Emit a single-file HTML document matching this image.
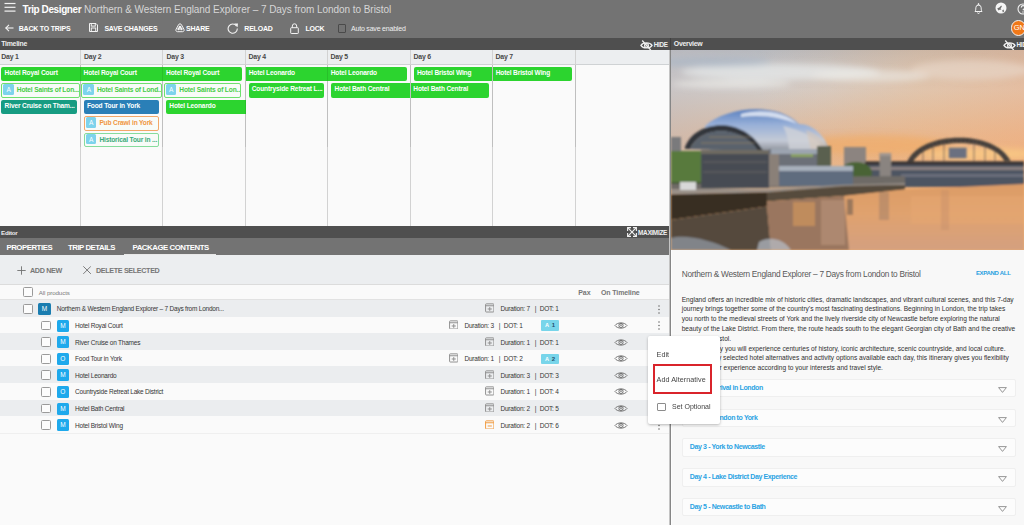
<!DOCTYPE html>
<html><head><meta charset="utf-8">
<style>
*{margin:0;padding:0;box-sizing:border-box}
html,body{width:1024px;height:525px;overflow:hidden;background:#fafafa;font-family:"Liberation Sans",sans-serif}
.a{position:absolute;white-space:nowrap}
#hdr{position:absolute;left:0;top:0;width:1024px;height:38px;background:#737373}
.tb{font-size:7px;font-weight:bold;color:#fff;letter-spacing:-0.2px}
.bar{position:absolute;height:12px;background:#4f4f4f}
.barlbl{font-size:6.9px;font-weight:bold;color:#eeeeee;top:2px;letter-spacing:-0.25px}
.col{position:absolute;top:50px;height:176px;border-left:1px solid #d2d2d2}
.dayh{position:absolute;top:50px;height:15px;background:#eceef0;border-bottom:1px solid #cfd2d4}
.dlbl{font-size:6.9px;font-weight:bold;color:#484848;top:53.2px;letter-spacing:-0.2px}
.blk{position:absolute;height:14.5px;border-radius:2px;font-size:6.6px;font-weight:bold;color:#fff;line-height:12.6px;padding-left:3.5px;white-space:nowrap;overflow:hidden;letter-spacing:-0.15px}
.g{background:#2cd42f}
.alt{background:#f8fbf8;border:1px solid #6ee06e;color:#44cc44;padding-left:0}
.badge{display:inline-block;width:10.5px;height:10.5px;background:#7dd3ec;color:#fff;border-radius:1.5px;text-align:center;line-height:11.3px;font-size:6.5px;font-weight:normal;margin:0 3px 0 1.2px;vertical-align:top;margin-top:0.4px}
.tab{top:243.5px;font-size:7.8px;font-weight:bold;color:#fff;line-height:8px;letter-spacing:-0.45px}
.tb2{top:266.5px;font-size:7.2px;font-weight:bold;color:#777;line-height:8px;letter-spacing:-0.35px}
.cb{width:9.8px;height:9.8px;border:1px solid #9a9a9a;border-radius:1.5px;background:#fcfcfc}
.mb{width:12.3px;height:12px;border-radius:1.5px;color:#fff;font-size:6.5px;text-align:center;line-height:12px}
.rt{font-size:6.5px;color:#353535;line-height:8px;margin-top:1.2px;letter-spacing:-0.22px}
.ab{width:18.7px;height:10.9px;background:#78d5ea;font-size:6px;color:#1a5c80;line-height:10.7px;text-align:center;border-radius:1px}
.acc{left:682.2px;width:333.5px;height:18.5px;background:#fcfcfc;border:1px solid #efefef;border-radius:2px}
.acct{left:689.8px;font-size:7px;font-weight:bold;color:#2ba3e3;line-height:9px;letter-spacing:-0.38px}
</style></head><body>
<!-- header -->
<div id="hdr"></div>
<svg class="a" style="left:4px;top:2px" width="12" height="11" viewBox="0 0 12 11"><g stroke="#f2f2f2" stroke-width="1.2"><line x1="0.5" y1="1.5" x2="11.5" y2="1.5"/><line x1="0.5" y1="5.3" x2="11.5" y2="5.3"/><line x1="0.5" y1="9.1" x2="11.5" y2="9.1"/></g></svg>
<div class="a" style="left:22.5px;top:2.8px;font-size:10px;font-weight:bold;color:#fff;letter-spacing:-0.4px;line-height:14px">Trip Designer</div>
<div class="a" style="left:84px;top:2.8px;font-size:10px;color:#d6d6d6;letter-spacing:-0.05px;line-height:14px">Northern &amp; Western England Explorer – 7 Days from London to Bristol</div>

<!-- toolbar -->
<svg class="a" style="left:4.5px;top:24px" width="9" height="8" viewBox="0 0 9 8"><g stroke="#f2f2f2" stroke-width="1.1" fill="none"><line x1="0.8" y1="4" x2="8.5" y2="4"/><polyline points="4,0.8 0.8,4 4,7.2"/></g></svg>
<div class="a tb" style="left:18.7px;top:24px;line-height:9px">BACK TO TRIPS</div>
<svg class="a" style="left:88.5px;top:23.3px" width="9" height="9" viewBox="0 0 9 9"><g stroke="#f2f2f2" stroke-width="1" fill="none"><path d="M0.5 0.5 H7 L8.5 2 V8.5 H0.5 Z"/><rect x="2.3" y="0.5" width="4" height="2.6"/><rect x="2.3" y="5" width="4.4" height="3.5"/></g></svg>
<div class="a tb" style="left:104.4px;top:24px;line-height:9px">SAVE CHANGES</div>
<svg class="a" style="left:175px;top:23px" width="10" height="9.5" viewBox="0 0 10 9.5"><path d="M5 0.8 C5.8 0.8 6.2 1.3 6.6 2 L8.9 6.2 C9.5 7.3 8.9 8.7 7.6 8.7 H2.4 C1.1 8.7 0.5 7.3 1.1 6.2 L3.4 2 C3.8 1.3 4.2 0.8 5 0.8 Z" fill="none" stroke="#f2f2f2" stroke-width="1"/><circle cx="5" cy="4.2" r="1.4" fill="#f2f2f2"/><circle cx="3.6" cy="6" r="1.2" fill="#f2f2f2"/><circle cx="6.4" cy="6" r="1.2" fill="#f2f2f2"/></svg>
<div class="a tb" style="left:186px;top:24px;line-height:9px">SHARE</div>
<svg class="a" style="left:227px;top:22.5px" width="12" height="11" viewBox="0 0 12 11"><path d="M9.6 3.2 A4.6 4.6 0 1 0 10.3 5.5" fill="none" stroke="#f2f2f2" stroke-width="1.1"/><path d="M7.2 0.6 L11 0.4 L10.6 4.2 Z" fill="#f2f2f2"/></svg>
<div class="a tb" style="left:244.3px;top:24px;line-height:9px">RELOAD</div>
<svg class="a" style="left:290px;top:22.5px" width="9" height="11" viewBox="0 0 9 11"><g stroke="#f2f2f2" stroke-width="1" fill="none"><rect x="0.7" y="4.7" width="7.6" height="5.8" rx="0.6"/><path d="M2.3 4.7 V3 A2.2 2.2 0 0 1 6.7 3 V4.7"/></g></svg>
<div class="a tb" style="left:305.4px;top:24px;line-height:9px">LOCK</div>
<div class="a" style="left:337.7px;top:24.4px;width:8.8px;height:8.8px;border:1px solid #4a4a4a;border-radius:1px"></div>
<div class="a" style="left:351px;top:24px;font-size:7px;color:#f0f0f0;letter-spacing:-0.2px;line-height:9px">Auto save enabled</div>
<!-- right icons -->
<svg class="a" style="left:974px;top:2.5px" width="9" height="11" viewBox="0 0 9 11"><g stroke="#f2f2f2" stroke-width="1" fill="none"><path d="M1 8.5 C1.8 7.5 1.8 6.5 1.8 4.8 A2.7 2.7 0 0 1 7.2 4.8 C7.2 6.5 7.2 7.5 8 8.5 Z"/><circle cx="4.5" cy="1.2" r="0.6" fill="#f2f2f2"/><path d="M3.6 9.6 A0.9 0.9 0 0 0 5.4 9.6" /></g></svg>
<svg class="a" style="left:995px;top:2.2px" width="12" height="12" viewBox="0 0 12 12"><circle cx="6" cy="6" r="5.5" fill="#f4f4f4"/><path d="M2.2 6.6 L4.6 5.2 L6.2 3.4 L6.9 4.6 L5.6 6.4 L6.4 8 L5 7.6 L3.6 8.4 Z" fill="#6c6c6c"/><path d="M7.2 8.2 L8.6 7.6 L9.2 9.4 L7.8 10.4 Z" fill="#7a7a7a"/></svg>
<svg class="a" style="left:1017px;top:2.5px" width="12" height="12" viewBox="0 0 12 12"><circle cx="6" cy="6" r="5" fill="none" stroke="#f2f2f2" stroke-width="1.1"/><path d="M4.3 4.6 A1.8 1.8 0 1 1 6.5 6.2 L6 7.3" fill="none" stroke="#f2f2f2" stroke-width="1.1"/><circle cx="6" cy="9" r="0.7" fill="#f2f2f2"/></svg>
<div class="a" style="left:1010.5px;top:20.3px;width:15.5px;height:15.5px;border-radius:50%;background:#f07818;border:1px solid #f4f4f4;color:#fff;font-size:7.5px;line-height:13.5px;padding-left:2.2px">GN</div>

<!-- timeline bar -->
<div class="bar" style="left:0;top:38px;width:670px"></div>
<div class="a barlbl" style="left:1.2px;top:39px;line-height:9px">Timeline</div>
<svg class="a" style="left:640px;top:39.5px" width="13" height="10.5" viewBox="0 0 13 10.5"><g stroke="#f0f0f0" stroke-width="1.25" fill="none"><path d="M0.9 5.4 C3 2 10 2 12.1 5.4 C10 8.8 3 8.8 0.9 5.4 Z"/><circle cx="6.5" cy="5.4" r="1.9"/><line x1="2.2" y1="0.5" x2="10.8" y2="10.2"/></g></svg>
<div class="a" style="left:653.7px;top:40.6px;font-size:6.3px;font-weight:bold;color:#f0f0f0;line-height:8px;letter-spacing:-0.25px">HIDE</div>
<div class="bar" style="left:671px;top:38px;width:353px"></div>
<div class="a barlbl" style="left:673.8px;top:39px;line-height:9px">Overview</div>
<svg class="a" style="left:1003px;top:39.5px" width="13" height="10.5" viewBox="0 0 13 10.5"><g stroke="#f0f0f0" stroke-width="1.25" fill="none"><path d="M0.9 5.4 C3 2 10 2 12.1 5.4 C10 8.8 3 8.8 0.9 5.4 Z"/><circle cx="6.5" cy="5.4" r="1.9"/><line x1="2.2" y1="0.5" x2="10.8" y2="10.2"/></g></svg>
<div class="a" style="left:1016.5px;top:40.6px;font-size:6.3px;font-weight:bold;color:#f0f0f0;line-height:8px;letter-spacing:-0.25px">HIDE</div>
<!-- timeline body -->
<div class="a" style="left:0;top:50px;width:670px;height:176px;background:#fafafa"></div>
<div class="dayh" style="left:0;width:670px"></div>
<div class="col" style="left:80px"></div>
<div class="col" style="left:162px"></div>
<div class="col" style="left:245px"></div>
<div class="col" style="left:327px"></div>
<div class="col" style="left:410px"></div>
<div class="col" style="left:492px"></div>
<div class="col" style="left:575px"></div>
<div class="a dlbl" style="left:1.3px;line-height:8px">Day 1</div>
<div class="a dlbl" style="left:84px;line-height:8px">Day 2</div>
<div class="a dlbl" style="left:166.5px;line-height:8px">Day 3</div>
<div class="a dlbl" style="left:248.5px;line-height:8px">Day 4</div>
<div class="a dlbl" style="left:330.5px;line-height:8px">Day 5</div>
<div class="a dlbl" style="left:413.5px;line-height:8px">Day 6</div>
<div class="a dlbl" style="left:495.5px;line-height:8px">Day 7</div>
<div class="blk g" style="left:1.1px;top:66.5px;width:79.9px;border-radius:2px 0 0 2px;">Hotel Royal Court</div>
<div class="blk g" style="left:81px;top:66.5px;width:82.5px;border-radius:0 0 0 0;padding-left:2.6px">Hotel Royal Court</div>
<div class="blk g" style="left:163.5px;top:66.5px;width:78.19999999999999px;border-radius:0 2px 2px 0;padding-left:2.6px">Hotel Royal Court</div>
<div class="blk g" style="left:245.5px;top:66.5px;width:82.0px;border-radius:0 0 0 0;padding-left:3.2px">Hotel Leonardo</div>
<div class="blk g" style="left:327.5px;top:66.5px;width:79.30000000000001px;border-radius:0 2px 2px 0;padding-left:3.2px">Hotel Leonardo</div>
<div class="blk g" style="left:413.7px;top:66.5px;width:78.80000000000001px;border-radius:2px 0 0 2px;padding-left:3.3px">Hotel Bristol Wing</div>
<div class="blk g" style="left:492.5px;top:66.5px;width:79.39999999999998px;border-radius:0 2px 2px 0;padding-left:3.2px">Hotel Bristol Wing</div>
<div class="blk alt" style="left:1.1px;top:83px;width:78.60000000000001px;border-radius:2px 2px 2px 2px;"><span class="badge">A</span>Hotel Saints of Lon...</div>
<div class="blk alt" style="left:81.3px;top:83px;width:80.7px;border-radius:2px 2px 2px 2px;"><span class="badge">A</span>Hotel Saints of Lond...</div>
<div class="blk alt" style="left:163.6px;top:83px;width:77.9px;border-radius:2px 2px 2px 2px;"><span class="badge">A</span>Hotel Saints of Lon...</div>
<div class="blk g" style="left:248.75px;top:83px;width:75.55000000000001px;border-radius:2px 2px 2px 2px;padding-left:3px">Countryside Retreat L...</div>
<div class="blk g" style="left:331.2px;top:83px;width:79.30000000000001px;border-radius:2px 0 0 2px;padding-left:3.4px">Hotel Bath Central</div>
<div class="blk g" style="left:410.5px;top:83px;width:78.80000000000001px;border-radius:0 2px 2px 0;padding-left:2.8px">Hotel Bath Central</div>
<div class="blk " style="left:1.1px;top:99.5px;width:75.60000000000001px;border-radius:2px 2px 2px 2px;background:#179c82;padding-left:3.5px">River Cruise on Tham...</div>
<div class="blk " style="left:83.7px;top:99.5px;width:75.60000000000001px;border-radius:2px 2px 2px 2px;background:#2a7fb7;padding-left:3.3px">Food Tour in York</div>
<div class="blk g" style="left:166px;top:99.5px;width:79.5px;border-radius:2px 0 0 2px;padding-left:3.3px">Hotel Leonardo</div>
<div class="blk alt" style="left:83.7px;top:116px;width:75.60000000000001px;border-radius:2px 2px 2px 2px;border-color:#f2a86a;color:#f0973f"><span class="badge">A</span>Pub Crawl in York</div>
<div class="blk alt" style="left:83.7px;top:132.5px;width:75.60000000000001px;border-radius:2px 2px 2px 2px;border-color:#86dc9c;color:#3aaa78"><span class="badge">A</span>Historical Tour in ...</div>

<div class="a" style="left:80px;top:65px;width:1px;height:82px;background:rgba(0,0,0,0.09)"></div>
<div class="a" style="left:162px;top:65px;width:1px;height:82px;background:rgba(0,0,0,0.09)"></div>
<div class="a" style="left:245px;top:65px;width:1px;height:82px;background:rgba(0,0,0,0.09)"></div>
<div class="a" style="left:327px;top:65px;width:1px;height:82px;background:rgba(0,0,0,0.09)"></div>
<div class="a" style="left:410px;top:65px;width:1px;height:82px;background:rgba(0,0,0,0.09)"></div>
<div class="a" style="left:492px;top:65px;width:1px;height:82px;background:rgba(0,0,0,0.09)"></div>
<div class="a" style="left:575px;top:65px;width:1px;height:82px;background:rgba(0,0,0,0.09)"></div>
<!-- editor -->
<div class="bar" style="left:0;top:226px;width:670px"></div>
<div class="a barlbl" style="left:1px;top:227.5px;line-height:9px;font-size:6.2px">Editor</div>
<svg class="a" style="left:627px;top:227.3px" width="10" height="10" viewBox="0 0 10 10"><g stroke="#f0f0f0" stroke-width="1.1" fill="none"><line x1="1.2" y1="1.2" x2="8.8" y2="8.8"/><line x1="8.8" y1="1.2" x2="1.2" y2="8.8"/><polyline points="0.6,4 0.6,0.6 4,0.6"/><polyline points="6,0.6 9.4,0.6 9.4,4"/><polyline points="0.6,6 0.6,9.4 4,9.4"/><polyline points="6,9.4 9.4,9.4 9.4,6"/></g></svg>
<div class="a" style="left:638px;top:228.6px;font-size:6.4px;font-weight:bold;color:#f0f0f0;line-height:8px;letter-spacing:-0.28px">MAXIMIZE</div>
<div class="a" style="left:0;top:238px;width:670px;height:16.5px;background:#737373"></div>
<div class="a" style="left:124.2px;top:253.5px;width:91.7px;height:1px;background:#e8e8e8"></div>
<div class="a tab" style="left:6.4px">PROPERTIES</div>
<div class="a tab" style="left:67.9px">TRIP DETAILS</div>
<div class="a tab" style="left:132.5px">PACKAGE CONTENTS</div>
<div class="a" style="left:0;top:254.5px;width:670px;height:30px;background:#eceef0;border-bottom:1px solid #dcdcdc"></div>
<svg class="a" style="left:17px;top:265.5px" width="9" height="9" viewBox="0 0 9 9"><g stroke="#707070" stroke-width="0.9"><line x1="4.5" y1="0.3" x2="4.5" y2="8.7"/><line x1="0.3" y1="4.5" x2="8.7" y2="4.5"/></g></svg>
<div class="a tb2" style="left:30px">ADD NEW</div>
<svg class="a" style="left:83.3px;top:265.7px" width="8.2" height="8.2" viewBox="0 0 8 8"><g stroke="#707070" stroke-width="0.9"><line x1="0.3" y1="0.3" x2="7.7" y2="7.7"/><line x1="7.7" y1="0.3" x2="0.3" y2="7.7"/></g></svg>
<div class="a tb2" style="left:96px">DELETE SELECTED</div>
<div class="a" style="left:0;top:285px;width:670px;height:15px;background:#fafafa;border-bottom:1px solid #e2e2e2"></div>
<div class="a cb" style="left:23px;top:287.4px"></div>
<div class="a" style="left:38.7px;top:288.7px;font-size:6.2px;color:#7a7a7a;line-height:8px;letter-spacing:-0.1px">All products</div>
<div class="a" style="left:578.3px;top:288.7px;font-size:7px;font-weight:bold;color:#777;line-height:8px;letter-spacing:-0.1px">Pax</div>
<div class="a" style="left:601px;top:288.7px;font-size:7px;font-weight:bold;color:#777;line-height:8px;letter-spacing:-0.12px">On Timeline</div>
<div class="a" style="left:0;top:300.00px;width:670px;height:16.6px;background:#ebedef"></div>
<div class="a cb" style="left:23px;top:304.00px"></div>
<div class="a mb" style="left:38.4px;top:303.00px;background:#1a7db0">M</div>
<div class="a rt" style="left:56.7px;top:304.30px">Northern &amp; Western England Explorer – 7 Days from London...</div>
<svg class="a" style="left:484.8px;top:303.30px" width="9.5" height="9.5" viewBox="0 0 10 10"><g stroke="#8c8c8c" stroke-width="1" fill="none"><rect x="0.6" y="0.9" width="8.8" height="8.6" rx="0.8"/><line x1="0.6" y1="2.9" x2="9.4" y2="2.9"/><line x1="5" y1="4.3" x2="5" y2="8.3"/><line x1="2.8" y1="6.3" x2="7.2" y2="6.3"/></g></svg>
<div class="a rt" style="left:500.5px;top:304.30px">Duration: 7</div><div class="a rt" style="left:534.7px;top:304.30px">|</div><div class="a rt" style="left:539.7px;top:304.30px">DOT: 1</div>
<svg class="a" style="left:657.7px;top:304.50px" width="2" height="9" viewBox="0 0 2 9"><g fill="#707070"><circle cx="1" cy="1" r="0.8"/><circle cx="1" cy="4.5" r="0.8"/><circle cx="1" cy="8" r="0.8"/></g></svg>
<div class="a" style="left:0;top:316.60px;width:670px;height:16.6px;background:#fafafa"></div>
<div class="a cb" style="left:41px;top:320.60px"></div>
<div class="a mb" style="left:56.7px;top:319.60px;background:#1ea9ec">M</div>
<div class="a rt" style="left:75.1px;top:320.90px">Hotel Royal Court</div>
<svg class="a" style="left:448.8px;top:319.90px" width="9.5" height="9.5" viewBox="0 0 10 10"><g stroke="#8c8c8c" stroke-width="1" fill="none"><rect x="0.6" y="0.9" width="8.8" height="8.6" rx="0.8"/><line x1="0.6" y1="2.9" x2="9.4" y2="2.9"/><line x1="5" y1="4.3" x2="5" y2="8.3"/><line x1="2.8" y1="6.3" x2="7.2" y2="6.3"/></g></svg>
<div class="a rt" style="left:464.5px;top:320.90px">Duration: 3</div><div class="a rt" style="left:498.7px;top:320.90px">|</div><div class="a rt" style="left:503.7px;top:320.90px">DOT: 1</div>
<div class="a ab" style="left:540.8px;top:320.30px"><span style="position:absolute;left:4.3px;top:0;color:#fff;font-size:5.6px;font-weight:bold">A</span><span style="position:absolute;left:11px;top:0;color:#23506e;font-weight:bold">1</span></div>
<svg class="a" style="left:613.6px;top:321.00px" width="14" height="9" viewBox="0 0 14 9"><path d="M1 4.5 C3.4 1 10.6 1 13 4.5 C10.6 8 3.4 8 1 4.5 Z" fill="none" stroke="#707070" stroke-width="0.95"/><circle cx="7" cy="4.4" r="2.1" fill="none" stroke="#707070" stroke-width="1"/><circle cx="7" cy="4.1" r="0.85" fill="#707070"/></svg>
<svg class="a" style="left:657.7px;top:321.10px" width="2" height="9" viewBox="0 0 2 9"><g fill="#707070"><circle cx="1" cy="1" r="0.8"/><circle cx="1" cy="4.5" r="0.8"/><circle cx="1" cy="8" r="0.8"/></g></svg>
<div class="a" style="left:0;top:333.20px;width:670px;height:16.6px;background:#ebedef"></div>
<div class="a cb" style="left:41px;top:337.20px"></div>
<div class="a mb" style="left:56.7px;top:336.20px;background:#1ea9ec">M</div>
<div class="a rt" style="left:75.1px;top:337.50px">River Cruise on Thames</div>
<svg class="a" style="left:484.8px;top:336.50px" width="9.5" height="9.5" viewBox="0 0 10 10"><g stroke="#8c8c8c" stroke-width="1" fill="none"><rect x="0.6" y="0.9" width="8.8" height="8.6" rx="0.8"/><line x1="0.6" y1="2.9" x2="9.4" y2="2.9"/><line x1="5" y1="4.3" x2="5" y2="8.3"/><line x1="2.8" y1="6.3" x2="7.2" y2="6.3"/></g></svg>
<div class="a rt" style="left:500.5px;top:337.50px">Duration: 1</div><div class="a rt" style="left:534.7px;top:337.50px">|</div><div class="a rt" style="left:539.7px;top:337.50px">DOT: 1</div>
<svg class="a" style="left:613.6px;top:337.60px" width="14" height="9" viewBox="0 0 14 9"><path d="M1 4.5 C3.4 1 10.6 1 13 4.5 C10.6 8 3.4 8 1 4.5 Z" fill="none" stroke="#707070" stroke-width="0.95"/><circle cx="7" cy="4.4" r="2.1" fill="none" stroke="#707070" stroke-width="1"/><circle cx="7" cy="4.1" r="0.85" fill="#707070"/></svg>
<div class="a" style="left:0;top:349.80px;width:670px;height:16.6px;background:#fafafa"></div>
<div class="a cb" style="left:41px;top:353.80px"></div>
<div class="a mb" style="left:56.7px;top:352.80px;background:#1ea9ec">O</div>
<div class="a rt" style="left:75.1px;top:354.10px">Food Tour in York</div>
<svg class="a" style="left:448.8px;top:353.10px" width="9.5" height="9.5" viewBox="0 0 10 10"><g stroke="#8c8c8c" stroke-width="1" fill="none"><rect x="0.6" y="0.9" width="8.8" height="8.6" rx="0.8"/><line x1="0.6" y1="2.9" x2="9.4" y2="2.9"/><line x1="5" y1="4.3" x2="5" y2="8.3"/><line x1="2.8" y1="6.3" x2="7.2" y2="6.3"/></g></svg>
<div class="a rt" style="left:464.5px;top:354.10px">Duration: 1</div><div class="a rt" style="left:498.7px;top:354.10px">|</div><div class="a rt" style="left:503.7px;top:354.10px">DOT: 2</div>
<div class="a ab" style="left:540.8px;top:353.50px"><span style="position:absolute;left:4.3px;top:0;color:#fff;font-size:5.6px;font-weight:bold">A</span><span style="position:absolute;left:11px;top:0;color:#23506e;font-weight:bold">2</span></div>
<svg class="a" style="left:613.6px;top:354.20px" width="14" height="9" viewBox="0 0 14 9"><path d="M1 4.5 C3.4 1 10.6 1 13 4.5 C10.6 8 3.4 8 1 4.5 Z" fill="none" stroke="#707070" stroke-width="0.95"/><circle cx="7" cy="4.4" r="2.1" fill="none" stroke="#707070" stroke-width="1"/><circle cx="7" cy="4.1" r="0.85" fill="#707070"/></svg>
<div class="a" style="left:0;top:366.40px;width:670px;height:16.6px;background:#ebedef"></div>
<div class="a cb" style="left:41px;top:370.40px"></div>
<div class="a mb" style="left:56.7px;top:369.40px;background:#1ea9ec">M</div>
<div class="a rt" style="left:75.1px;top:370.70px">Hotel Leonardo</div>
<svg class="a" style="left:484.8px;top:369.70px" width="9.5" height="9.5" viewBox="0 0 10 10"><g stroke="#8c8c8c" stroke-width="1" fill="none"><rect x="0.6" y="0.9" width="8.8" height="8.6" rx="0.8"/><line x1="0.6" y1="2.9" x2="9.4" y2="2.9"/><line x1="5" y1="4.3" x2="5" y2="8.3"/><line x1="2.8" y1="6.3" x2="7.2" y2="6.3"/></g></svg>
<div class="a rt" style="left:500.5px;top:370.70px">Duration: 3</div><div class="a rt" style="left:534.7px;top:370.70px">|</div><div class="a rt" style="left:539.7px;top:370.70px">DOT: 3</div>
<svg class="a" style="left:613.6px;top:370.80px" width="14" height="9" viewBox="0 0 14 9"><path d="M1 4.5 C3.4 1 10.6 1 13 4.5 C10.6 8 3.4 8 1 4.5 Z" fill="none" stroke="#707070" stroke-width="0.95"/><circle cx="7" cy="4.4" r="2.1" fill="none" stroke="#707070" stroke-width="1"/><circle cx="7" cy="4.1" r="0.85" fill="#707070"/></svg>
<div class="a" style="left:0;top:383.00px;width:670px;height:16.6px;background:#fafafa"></div>
<div class="a cb" style="left:41px;top:387.00px"></div>
<div class="a mb" style="left:56.7px;top:386.00px;background:#1ea9ec">O</div>
<div class="a rt" style="left:75.1px;top:387.30px">Countryside Retreat Lake District</div>
<svg class="a" style="left:484.8px;top:386.30px" width="9.5" height="9.5" viewBox="0 0 10 10"><g stroke="#8c8c8c" stroke-width="1" fill="none"><rect x="0.6" y="0.9" width="8.8" height="8.6" rx="0.8"/><line x1="0.6" y1="2.9" x2="9.4" y2="2.9"/><line x1="5" y1="4.3" x2="5" y2="8.3"/><line x1="2.8" y1="6.3" x2="7.2" y2="6.3"/></g></svg>
<div class="a rt" style="left:500.5px;top:387.30px">Duration: 1</div><div class="a rt" style="left:534.7px;top:387.30px">|</div><div class="a rt" style="left:539.7px;top:387.30px">DOT: 4</div>
<svg class="a" style="left:613.6px;top:387.40px" width="14" height="9" viewBox="0 0 14 9"><path d="M1 4.5 C3.4 1 10.6 1 13 4.5 C10.6 8 3.4 8 1 4.5 Z" fill="none" stroke="#707070" stroke-width="0.95"/><circle cx="7" cy="4.4" r="2.1" fill="none" stroke="#707070" stroke-width="1"/><circle cx="7" cy="4.1" r="0.85" fill="#707070"/></svg>
<div class="a" style="left:0;top:399.60px;width:670px;height:16.6px;background:#ebedef"></div>
<div class="a cb" style="left:41px;top:403.60px"></div>
<div class="a mb" style="left:56.7px;top:402.60px;background:#1ea9ec">M</div>
<div class="a rt" style="left:75.1px;top:403.90px">Hotel Bath Central</div>
<svg class="a" style="left:484.8px;top:402.90px" width="9.5" height="9.5" viewBox="0 0 10 10"><g stroke="#8c8c8c" stroke-width="1" fill="none"><rect x="0.6" y="0.9" width="8.8" height="8.6" rx="0.8"/><line x1="0.6" y1="2.9" x2="9.4" y2="2.9"/><line x1="5" y1="4.3" x2="5" y2="8.3"/><line x1="2.8" y1="6.3" x2="7.2" y2="6.3"/></g></svg>
<div class="a rt" style="left:500.5px;top:403.90px">Duration: 2</div><div class="a rt" style="left:534.7px;top:403.90px">|</div><div class="a rt" style="left:539.7px;top:403.90px">DOT: 5</div>
<svg class="a" style="left:613.6px;top:404.00px" width="14" height="9" viewBox="0 0 14 9"><path d="M1 4.5 C3.4 1 10.6 1 13 4.5 C10.6 8 3.4 8 1 4.5 Z" fill="none" stroke="#707070" stroke-width="0.95"/><circle cx="7" cy="4.4" r="2.1" fill="none" stroke="#707070" stroke-width="1"/><circle cx="7" cy="4.1" r="0.85" fill="#707070"/></svg>
<div class="a" style="left:0;top:416.20px;width:670px;height:16.6px;background:#fafafa"></div>
<div class="a cb" style="left:41px;top:420.20px"></div>
<div class="a mb" style="left:56.7px;top:419.20px;background:#1ea9ec">M</div>
<div class="a rt" style="left:75.1px;top:420.50px">Hotel Bristol Wing</div>
<svg class="a" style="left:484.8px;top:419.50px" width="9.5" height="9.5" viewBox="0 0 10 10"><g stroke="#f0983a" stroke-width="1" fill="none"><rect x="0.6" y="0.9" width="8.8" height="8.6" rx="0.8"/><line x1="0.6" y1="2.9" x2="9.4" y2="2.9"/><line x1="2.8" y1="6.3" x2="7.2" y2="6.3"/></g></svg>
<div class="a rt" style="left:500.5px;top:420.50px">Duration: 2</div><div class="a rt" style="left:534.7px;top:420.50px">|</div><div class="a rt" style="left:539.7px;top:420.50px">DOT: 6</div>
<svg class="a" style="left:613.6px;top:420.60px" width="14" height="9" viewBox="0 0 14 9"><path d="M1 4.5 C3.4 1 10.6 1 13 4.5 C10.6 8 3.4 8 1 4.5 Z" fill="none" stroke="#707070" stroke-width="0.95"/><circle cx="7" cy="4.4" r="2.1" fill="none" stroke="#707070" stroke-width="1"/><circle cx="7" cy="4.1" r="0.85" fill="#707070"/></svg>
<svg class="a" style="left:657.7px;top:420.70px" width="2" height="9" viewBox="0 0 2 9"><g fill="#707070"><circle cx="1" cy="1" r="0.8"/><circle cx="1" cy="4.5" r="0.8"/><circle cx="1" cy="8" r="0.8"/></g></svg>

<div class="a" style="left:0;top:432.6px;width:669px;height:1px;background:#efefef"></div>
<!-- photo -->
<svg class="a" style="left:671px;top:50px" width="353" height="200" viewBox="0 0 353 200">
<defs>
<linearGradient id="sky" x1="0" y1="0" x2="0" y2="1">
<stop offset="0" stop-color="#a8b6c4"/>
<stop offset="0.1" stop-color="#c2cad2"/>
<stop offset="0.2" stop-color="#d2d2d2"/>
<stop offset="0.3" stop-color="#d8c6b6"/>
<stop offset="0.42" stop-color="#e2b896"/>
<stop offset="0.54" stop-color="#eab07e"/>
<stop offset="0.7" stop-color="#eeae72"/>
</linearGradient>
<linearGradient id="skyr" x1="0" y1="0" x2="1" y2="0">
<stop offset="0.25" stop-color="#f0b888" stop-opacity="0"/>
<stop offset="0.7" stop-color="#f0b888" stop-opacity="0.45"/>
<stop offset="1" stop-color="#f2b080" stop-opacity="0.6"/>
</linearGradient>
<linearGradient id="skyl" x1="0" y1="0" x2="1" y2="0">
<stop offset="0" stop-color="#c4bcbc" stop-opacity="0.6"/>
<stop offset="0.45" stop-color="#d4c0b4" stop-opacity="0.25"/>
<stop offset="1" stop-color="#f0b070" stop-opacity="0"/>
</linearGradient>
<linearGradient id="river" x1="0" y1="0" x2="0" y2="1">
<stop offset="0" stop-color="#dc9c66"/>
<stop offset="0.45" stop-color="#e0a26e"/>
<stop offset="1" stop-color="#d4a080"/>
</linearGradient>
<linearGradient id="dome" x1="0" y1="0" x2="0" y2="1">
<stop offset="0" stop-color="#5a80c0"/>
<stop offset="0.35" stop-color="#98b0d8"/>
<stop offset="0.7" stop-color="#c4cad6"/>
<stop offset="1" stop-color="#7c8088"/>
</linearGradient>
<filter id="bl" x="-5%" y="-5%" width="110%" height="110%"><feGaussianBlur stdDeviation="0.9"/></filter>
<filter id="bl2" x="-20%" y="-50%" width="140%" height="200%"><feGaussianBlur stdDeviation="3"/></filter>
</defs>
<rect width="353" height="200" fill="url(#sky)"/>
<rect width="353" height="140" fill="url(#skyl)"/>
<rect width="353" height="130" fill="url(#skyr)"/>
<g filter="url(#bl2)">
<ellipse cx="110" cy="22" rx="100" ry="8" fill="#e6e8e8" opacity="0.75"/>
<ellipse cx="60" cy="34" rx="60" ry="4" fill="#eeeeea" opacity="0.7"/>
<ellipse cx="200" cy="26" rx="60" ry="6" fill="#ecebe6" opacity="0.6"/>
<ellipse cx="40" cy="12" rx="60" ry="5" fill="#a6b6c6" opacity="0.6"/>
<ellipse cx="300" cy="20" rx="60" ry="10" fill="#ead8cc" opacity="0.6"/>
<ellipse cx="310" cy="104" rx="60" ry="6" fill="#f8c884" opacity="0.9"/>
<ellipse cx="200" cy="95" rx="80" ry="10" fill="#f2aa62" opacity="0.6"/>
</g>
<g filter="url(#bl)">
<!-- horizon structures right -->
<rect x="173" y="97" width="22" height="20" fill="#8c8480"/>
<rect x="194" y="113" width="159" height="24" fill="#4e5462"/>
<rect x="194" y="117" width="159" height="3" fill="#8a8080"/><rect x="230" y="124" width="123" height="3" fill="#6a6e7c"/>
<!-- Tyne bridge arch -->
<path d="M236 112 C250 79.7 325 79.7 339.5 111 L333.5 111 C320 87 256 87 242 112 Z" fill="#3e3a38"/><path d="M239.5 111.5 C253 84 322 84 336.5 111" fill="none" stroke="#7a6458" stroke-width="0.8" stroke-dasharray="2 2"/>

<g stroke="#5a5250" stroke-width="0.7"><line x1="252" y1="99" x2="252" y2="111"/><line x1="262" y1="94" x2="262" y2="111"/><line x1="273" y1="91" x2="273" y2="111"/><line x1="303" y1="91" x2="303" y2="111"/><line x1="314" y1="94" x2="314" y2="111"/><line x1="324" y1="99" x2="324" y2="111"/></g>
<rect x="277.8" y="97.7" width="17.8" height="10.5" fill="#6a7080"/>
<rect x="194" y="111.3" width="159" height="3.6" fill="#3a3636"/>
<!-- stone tower -->
<rect x="208.6" y="103" width="11.5" height="30" fill="#8a8480"/>
<rect x="208.6" y="103" width="11.5" height="3" fill="#a09690"/>
<!-- trees -->
<ellipse cx="185" cy="123" rx="16" ry="11" fill="#4a6434"/>
<rect x="189" y="127" width="12" height="7" fill="#9cc46a"/>
<!-- Sage: big dome -->
<path d="M34 76 C55 56 108 52 128 74 C142 74 154 86 158 99 L40 104 Z" fill="url(#dome)"/>
<path d="M70 64 C90 58 115 62 126 74 C112 68 92 64 70 67 Z" fill="#e4eaf4" opacity="0.85"/>
<path d="M112 76 C130 80 148 88 152 100 L118 102 C118 92 116 84 112 76 Z" fill="#cfd2d8" opacity="0.8"/>
<path d="M135 80 C148 84 154 92 157 99 L140 100 Z" fill="#d8c8b8" opacity="0.6"/>
<!-- Sage front arch -->
<path d="M13.6 98.7 C22 70 72 64 92.2 100.8 L87 101 C70 74 28 76 19 99 Z" fill="#30343a"/>
<path d="M19 99 C28 76 70 74 87 101 Z" fill="#5a626c"/>
<g stroke="#9a8866" stroke-width="0.9" opacity="0.75"><line x1="38" y1="87" x2="80" y2="87"/><line x1="30" y1="93" x2="84" y2="93"/></g>
<!-- Sage lower structures -->
<path d="M0 128 L234 126 L234 134 L0 140 Z" fill="#6e6a66"/>
<rect x="0" y="126" width="30" height="8" fill="#4a5a3a"/>

<rect x="0" y="87" width="10" height="14" fill="#7a7a7c"/>
<rect x="0" y="101" width="34" height="31" fill="#587a3c"/>
<rect x="30" y="100" width="68" height="38" fill="#464b52"/><g stroke="#7a7870" stroke-width="0.8" opacity="0.8"><line x1="32" y1="112" x2="96" y2="112"/><line x1="32" y1="122" x2="96" y2="122"/></g>
<rect x="30" y="100" width="68" height="4" fill="#6e6a62"/>
<rect x="98" y="99" width="62" height="17" fill="#6c7078"/><rect x="100" y="99" width="56" height="5" fill="#9ca4b0"/><rect x="120" y="104" width="22" height="3" fill="#8aa060"/><rect x="146" y="96" width="14" height="20" fill="#5a6050"/>
<rect x="106" y="116" width="76" height="5" fill="#a8b0bc"/>
<rect x="106" y="121" width="76" height="15" fill="#5e6c7e"/>
<rect x="98" y="104" width="10" height="32" fill="#8a8078"/>
<!-- quay top walkway -->
<path d="M0 139 L96 139 L173 134.8 L234 133.2 L234 135 L173 136.5 L96 142.3 L0 144.5 Z" fill="#9a9088"/>
<rect x="9" y="132" width="16" height="8" fill="#d8d8d8"/>
<!-- quay walls -->
<path d="M0 144.5 L96 142.3 L96 156.4 L0 170 Z" fill="#392e24"/>
<path d="M96 142.3 L173 136 L234 135 L234 139.6 L173 146 L96 151.6 Z" fill="#564b3c"/>
<!-- river -->
<path d="M0 170 L96 156.4 L96 151.6 L173 146 L234 139.6 L353 134 L353 200 L0 200 Z" fill="url(#river)"/>
<!-- reflections -->
<path d="M0 170 L96 156.4 L100 200 L0 200 Z" fill="#54483e"/>
<path d="M96 156 L96 151.6 L173 146 L178 200 L100 200 Z" fill="#9a765e"/>
<path d="M0 188 C15 184 40 190 60 200 L0 200 Z" fill="#8c949c" opacity="0.8"/>
<rect x="122" y="152" width="22" height="24" fill="#c8925c" opacity="0.8"/>
<path d="M88 192 C98 186 112 188 120 200 L86 200 Z" fill="#b8c0cc" opacity="0.7"/>
<rect x="150" y="150" width="24" height="45" fill="#c09a80" opacity="0.5"/>
<rect x="176" y="149" width="6" height="16" fill="#6e5e52" opacity="0.6"/>
<rect x="208" y="142" width="10" height="28" fill="#9a7a68" opacity="0.45"/>
<rect x="240" y="146" width="113" height="28" fill="#e6a872" opacity="0.5"/>
<rect x="270" y="140" width="8" height="40" fill="#c08a6a" opacity="0.35"/>
</g>
</svg>

<!-- overview -->
<div class="a" style="left:671px;top:250px;width:353px;height:275px;background:#f8f8f8"></div>
<div class="a" style="left:681.7px;top:269px;font-size:8.3px;color:#585858;line-height:10px;letter-spacing:-0.28px">Northern &amp; Western England Explorer – 7 Days from London to Bristol</div>
<div class="a" style="left:975.9px;top:270.3px;font-size:6px;font-weight:bold;color:#2aa0e0;line-height:7px;letter-spacing:-0.3px">EXPAND ALL</div>
<div class="a" style="left:681.7px;top:294.5px;width:340px;font-size:6.6px;color:#303030;line-height:9.83px;white-space:normal">
<div style="white-space:nowrap">England offers an incredible mix of historic cities, dramatic landscapes, and vibrant cultural scenes, and this 7-day</div>
<div style="white-space:nowrap">journey brings together some of the country’s most fascinating destinations. Beginning in London, the trip takes</div>
<div style="white-space:nowrap">you north to the medieval streets of York and the lively riverside city of Newcastle before exploring the natural</div>
<div style="white-space:nowrap">beauty of the Lake District. From there, the route heads south to the elegant Georgian city of Bath and the creative</div>
<div style="white-space:nowrap">energy of Bristol.</div>
<div style="white-space:nowrap">Along the way you will experience centuries of history, iconic architecture, scenic countryside, and local culture.</div>
<div style="white-space:nowrap">With carefully selected hotel alternatives and activity options available each day, this itinerary gives you flexibility</div>
<div style="white-space:nowrap">to shape your experience according to your interests and travel style.</div>
</div>
<div class="a acc" style="top:378.6px"></div>
<div class="a acct" style="top:382.6px">Day 1 - Arrival in London</div>
<svg class="a" style="left:997.5px;top:386.8px" width="9" height="6" viewBox="0 0 9 6"><path d="M0.6 0.6 H8.4 L4.5 5.4 Z" fill="none" stroke="#8a8a8a" stroke-width="0.9"/></svg>
<div class="a acc" style="top:408.5px"></div>
<div class="a acct" style="top:412.5px">Day 2 - London to York</div>
<svg class="a" style="left:997.5px;top:416.7px" width="9" height="6" viewBox="0 0 9 6"><path d="M0.6 0.6 H8.4 L4.5 5.4 Z" fill="none" stroke="#8a8a8a" stroke-width="0.9"/></svg>
<div class="a acc" style="top:438.2px"></div>
<div class="a acct" style="top:442.2px">Day 3 - York to Newcastle</div>
<svg class="a" style="left:997.5px;top:446.4px" width="9" height="6" viewBox="0 0 9 6"><path d="M0.6 0.6 H8.4 L4.5 5.4 Z" fill="none" stroke="#8a8a8a" stroke-width="0.9"/></svg>
<div class="a acc" style="top:468.2px"></div>
<div class="a acct" style="top:472.2px">Day 4 - Lake District Day Experience</div>
<svg class="a" style="left:997.5px;top:476.4px" width="9" height="6" viewBox="0 0 9 6"><path d="M0.6 0.6 H8.4 L4.5 5.4 Z" fill="none" stroke="#8a8a8a" stroke-width="0.9"/></svg>
<div class="a acc" style="top:497.8px"></div>
<div class="a acct" style="top:501.8px">Day 5 - Newcastle to Bath</div>
<svg class="a" style="left:997.5px;top:506.0px" width="9" height="6" viewBox="0 0 9 6"><path d="M0.6 0.6 H8.4 L4.5 5.4 Z" fill="none" stroke="#8a8a8a" stroke-width="0.9"/></svg>
<div class="a acc" style="top:527.5px"></div>
<div class="a acct" style="top:531.5px">Day 6 - Bath to Bristol</div>
<svg class="a" style="left:997.5px;top:535.7px" width="9" height="6" viewBox="0 0 9 6"><path d="M0.6 0.6 H8.4 L4.5 5.4 Z" fill="none" stroke="#8a8a8a" stroke-width="0.9"/></svg>

<div class="a" style="left:669px;top:50px;width:1px;height:475px;background:#c4c4c4"></div><div class="a" style="left:670px;top:50px;width:1px;height:475px;background:#868686"></div><div class="a" style="left:670px;top:38px;width:1px;height:12px;background:#404040"></div><div class="a" style="left:671px;top:250px;width:1px;height:275px;background:#fdfdfd"></div>

<!-- popup -->
<div class="a" style="left:648px;top:336.4px;width:72px;height:87.6px;background:#fff;border-radius:2px;box-shadow:0 1px 3px rgba(0,0,0,0.28)"></div>
<div class="a" style="left:656.6px;top:349.5px;font-size:7.2px;color:#444;line-height:9px">Edit</div>
<div class="a" style="left:652.5px;top:364px;width:59.5px;height:29.8px;border:2px solid #d9242b"></div>
<div class="a" style="left:656.6px;top:375.3px;font-size:7.2px;color:#444;line-height:9px;letter-spacing:0.05px">Add Alternative</div>
<div class="a" style="left:657.1px;top:402.7px;width:8.8px;height:8.8px;border:1px solid #8c8c8c;border-radius:1px"></div>
<div class="a" style="left:672px;top:402.3px;font-size:7px;color:#444;line-height:9px">Set Optional</div>


</body></html>
